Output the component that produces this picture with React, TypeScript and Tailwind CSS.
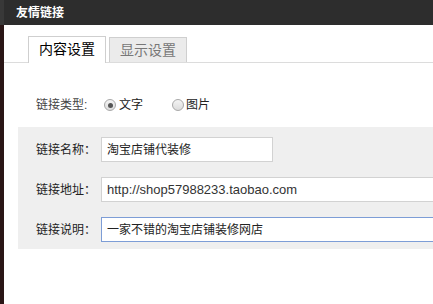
import React from "react";

const FONT = { fontFamily: '"Liberation Sans", "Noto Sans CJK SC", sans-serif' };

function Radio({ checked }: { checked?: boolean }) {
  return (
    <span className="flex h-[12px] w-[12px] items-center justify-center rounded-full border border-[#a8a8a8] bg-gradient-to-b from-[#f4f4f4] to-[#dcdcdc]">
      {checked && <span className="h-[5px] w-[5px] rounded-full bg-[#555]" />}
    </span>
  );
}

function Row({ label, children }: { label: string; children: React.ReactNode }) {
  return (
    <div className="flex h-[25px] items-center">
      <div className="w-[65px] shrink-0 text-[12px] text-[#222]">{label}</div>
      {children}
    </div>
  );
}

export default function App() {
  return (
    <div className="flex h-[304px] w-[433px] flex-col overflow-hidden bg-white" style={FONT}>
      <div className="flex h-[25px] shrink-0 items-center bg-[#2d2d2d]">
        <div className="h-full w-[4px] bg-[#383838]" />
        <span className="pl-[12px] text-[12px] font-bold text-white">友情链接</span>
      </div>

      <div className="flex flex-1">
        <div className="w-[4px] shrink-0 bg-[#2a1616]" />

        <div className="flex min-w-0 flex-1 flex-col">
          <div className="flex items-end gap-[3px] border-b border-[#dcdcdc] pl-[24px] pt-[11px]">
            <div className="-mb-px flex h-[27px] w-[78px] items-center justify-center border border-b-0 border-[#cfcfcf] bg-white pb-[2px] text-[14px] text-black">
              内容设置
            </div>
            <div className="flex h-[25px] w-[78px] items-center justify-center border border-b-0 border-[#cfcfcf] bg-[#ebebeb] text-[14px] text-[#777]">
              显示设置
            </div>
          </div>

          <div className="mt-[32px] flex h-[20px] items-center pl-[32px]">
            <div className="w-[65px] shrink-0 text-[12px] text-[#444]">链接类型:</div>
            <label className="ml-[3px] flex items-center gap-[3px] text-[12px] text-[#222]">
              <Radio checked />
              文字
            </label>
            <label className="ml-[29px] flex items-center gap-[2px] text-[12px] text-[#222]">
              <Radio />
              图片
            </label>
          </div>

          <div className="ml-[14px] mt-[12px] flex flex-col gap-[15px] bg-[#efefef] pb-[7px] pl-[18px] pt-[10px]">
            <Row label="链接名称：">
              <div className="flex h-[25px] w-[172px] shrink-0 items-center border border-[#d2d2d2] bg-white pl-[5px] text-[12px] text-[#222]">
                淘宝店铺代装修
              </div>
            </Row>
            <Row label="链接地址：">
              <div className="flex h-[25px] w-[360px] shrink-0 items-center border border-[#d2d2d2] bg-white pl-[5px] text-[13px] text-[#333]">
                http://shop57988233.taobao.com
              </div>
            </Row>
            <Row label="链接说明：">
              <div className="flex h-[25px] w-[360px] shrink-0 items-center border border-[#7d9dd6] bg-white pl-[5px] text-[12px] text-[#222]">
                一家不错的淘宝店铺装修网店
              </div>
            </Row>
          </div>
        </div>
      </div>
    </div>
  );
}
